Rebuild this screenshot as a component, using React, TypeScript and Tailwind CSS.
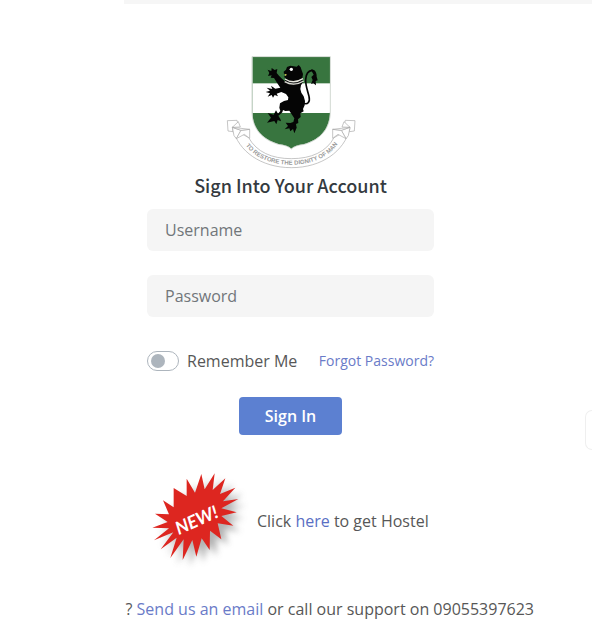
import React, { useState } from 'react';

const inputClasses =
  'block h-[42px] w-full rounded-md bg-[#f5f5f5] px-[18px] text-base text-[#495057] placeholder:text-[#71767a] outline-none focus:ring-1 focus:ring-[#5c80d1]';

const Crest: React.FC = () => (
  <svg viewBox="3 0 450 384" className="h-32 w-[150px]" role="img" aria-label="University crest">
    {/* shield */}
    <clipPath id="shield">
      <path d="M112 36H345V198C345 250 318 282 268 297Q240 300 229 311Q218 300 190 297C140 282 112 250 112 198Z" />
    </clipPath>
    <g clipPath="url(#shield)">
      <rect x="100" y="30" width="260" height="290" fill="#38753f" />
      <rect x="100" y="115" width="260" height="89" fill="#fff" />
    </g>
    <path
      d="M111 35H346V198C346 250 318 283 268 298Q240 301 229 312Q218 301 190 298C140 283 111 250 111 198Z"
      fill="none"
      stroke="#b9c4ba"
      strokeWidth="2"
    />

    {/* lion */}
    <g transform="translate(147 51)">
      <path
        d="M59 29L66 23L69 15L79 11L89 13L98 14L104 9L110 16L113 25L117 36L115 49L117 60L111 70L109 81L112 92L119 103L123 117L122 130L117 141L119 148L109 154L110 165L102 172L103 183L96 186L98 197L91 214L87 201L79 208L76 199L62 202L72 192L65 182L79 183L88 180L91 169L83 157L76 146L64 147L57 144L55 151L47 158L43 161L49 171L51 178L41 174L37 187L31 177L9 182L21 167L11 153L29 158L36 145L42 155L49 147L46 137L48 124L60 117L72 114L73 106L66 96L52 90L38 95L42 103L32 99L27 107L23 99L11 104L18 94L5 90L18 86L8 77L25 81L21 71L34 80L49 77L39 62L30 48L20 47L23 40L12 42L16 33L11 23L22 27L23 18L32 24L40 21L38 33L45 41L54 50L63 58L65 48L59 45L68 38L60 36Z"
        fill="#050505"
      />
      <path
        d="M115 121C131 132 139 119 135 103C131 86 124 70 125 52C126 35 135 26 145 25"
        fill="none"
        stroke="#050505"
        strokeWidth="5"
      />
      <path d="M142 22C153 22 159 33 158 44L161 55L155 57L156 70L148 64L141 66L146 54L142 45L149 38L144 29Z" fill="#050505" />
      <path d="M63 51Q88 68 117 50M62 59Q90 75 119 57" fill="none" stroke="#e8e8df" strokeWidth="4" />
      <path d="M65 60Q90 70 116 58" fill="none" stroke="#9a9a9a" strokeWidth="1" />
      <ellipse cx="82" cy="22" rx="5" ry="5" fill="#fff" />
      <path d="M62 35L69 38L64 42Z" fill="#d9c64c" />
    </g>

    {/* motto ribbon */}
    <g fill="#fff" stroke="#a9a9a9" strokeWidth="2" strokeLinejoin="round">
      <path d="M54 252C70 318 137 368 229 368C321 368 388 318 404 252L357 278C334 321 288 341 229 341C170 341 125 321 101 278Z" />
      <path d="M37 227L66 226L70 242L52 247L54 260L39 258Z" />
      <path d="M52 247L70 230L76 246Z" />
      <path d="M52 247L78 256L64 281L57 272Z" />
      <path d="M78 256L104 253V280L88 268L64 281Z" />
      <path d="M52 247L104 253L78 256Z" />
      <path d="M420 227L391 226L387 242L405 247L403 260L418 258Z" />
      <path d="M405 247L387 230L381 246Z" />
      <path d="M405 247L379 256L393 281L400 272Z" />
      <path d="M379 256L353 253V280L369 268L393 281Z" />
      <path d="M405 247L353 253L379 256Z" />
    </g>
    <path id="motto" d="M84 289C112 336 166 359 229 359C292 359 348 335 376 285" fill="none" />
    <text fill="#9a9a9a" fontSize="18" fontWeight="700" fontFamily="Liberation Sans, sans-serif" textAnchor="middle">
      <textPath href="#motto" startOffset="50%">
        TO RESTORE THE DIGNITY OF MAN
      </textPath>
    </text>
  </svg>
);

const burstPoints =
  '187,42 197,88 227,40 221,90 259,55 243,102 289,83 252,124 298,117 247,145 293,157 247,168 283,197 236,190 247,238 213,212 212,270 188,235 172,290 160,240 131,300 134,238 94,294 113,233 65,268 103,217 45,241 90,205 40,203 86,186 48,161 90,163 72,121 104,142 104,84 143,108 143,56 168,98';

const NewBadge: React.FC = () => (
  <svg viewBox="0 -3 360 360" className="size-[120px] shrink-0">
    <defs>
      <filter id="burstShadow" x="-20%" y="-20%" width="150%" height="150%">
        <feGaussianBlur stdDeviation="9" />
      </filter>
    </defs>
    <polygon points={burstPoints} transform="translate(20 17)" fill="#666" opacity="0.5" filter="url(#burstShadow)" />
    <polygon points={burstPoints} fill="#dd2620" />
    <text
      transform="translate(119 225) rotate(-24)"
      fill="#fff"
      fontSize="54"
      fontStyle="italic"
      fontWeight="700"
      fontFamily="Lato, sans-serif"
    >
      NEW!
    </text>
  </svg>
);

export default function App() {
  const [username, setUsername] = useState('');
  const [password, setPassword] = useState('');
  const [remember, setRemember] = useState(false);

  return (
    <div className="relative min-h-screen overflow-hidden bg-white pl-[124px] font-['Open_Sans',sans-serif] text-base text-[#575757]">
      <div className="h-1 bg-[#f6f6f6]" />

      <main className="ml-[23px] max-w-[287px] pt-[41px]">
        <div className="flex flex-col items-center">
          <Crest />
          <h1 className="font-['Noto_Sans_CJK_SC',sans-serif] text-lg leading-6 font-medium text-[#343a40]">
            Sign Into Your Account
          </h1>
        </div>

        <form className="mt-3" onSubmit={(e) => e.preventDefault()}>
          <input
            type="text"
            aria-label="Username"
            placeholder="Username"
            value={username}
            onChange={(e) => setUsername(e.target.value)}
            className={inputClasses}
          />
          <input
            type="password"
            aria-label="Password"
            placeholder="Password"
            value={password}
            onChange={(e) => setPassword(e.target.value)}
            className={`mt-6 ${inputClasses}`}
          />

          <div className="mt-8 flex items-center justify-between whitespace-nowrap">
            <label className="flex items-center gap-2">
              <input
                type="checkbox"
                checked={remember}
                onChange={(e) => setRemember(e.target.checked)}
                className="flex h-5 w-8 appearance-none items-center rounded-full border border-[#adb5bd] bg-white px-[3px] before:size-[14px] before:rounded-full before:bg-[#adb5bd] checked:justify-end checked:border-[#5c80d1] checked:before:bg-[#5c80d1]"
              />
              Remember Me
            </label>
            <a href="#forgot" className="text-sm text-[#6a7bc8]">
              Forgot Password?
            </a>
          </div>

          <button
            type="submit"
            className="mx-auto mt-6 block h-[38px] rounded bg-[#5c80d1] px-[26px] font-semibold text-white"
          >
            Sign In
          </button>
        </form>

        <div className="-ml-2 mt-6 flex items-center whitespace-nowrap">
          <NewBadge />
          <p className="-ml-0.5 pt-1">
            Click{' '}
            <a href="#hostel" className="text-[#5a6fc4]">
              here
            </a>{' '}
            to get Hostel
          </p>
        </div>
      </main>

      <footer className="mt-[18px] flex justify-end pr-[58px] whitespace-nowrap">
        <p>
          ?{' '}
          <a href="#email" className="text-[#6a7bc8]">
            Send us an email
          </a>{' '}
          or call our support on 09055397623
        </p>
      </footer>

      {/* side panel handle */}
      <div className="absolute top-[410px] right-0 h-10 w-[7px] rounded-l-lg border border-r-0 border-[#efefef]" />
    </div>
  );
}
